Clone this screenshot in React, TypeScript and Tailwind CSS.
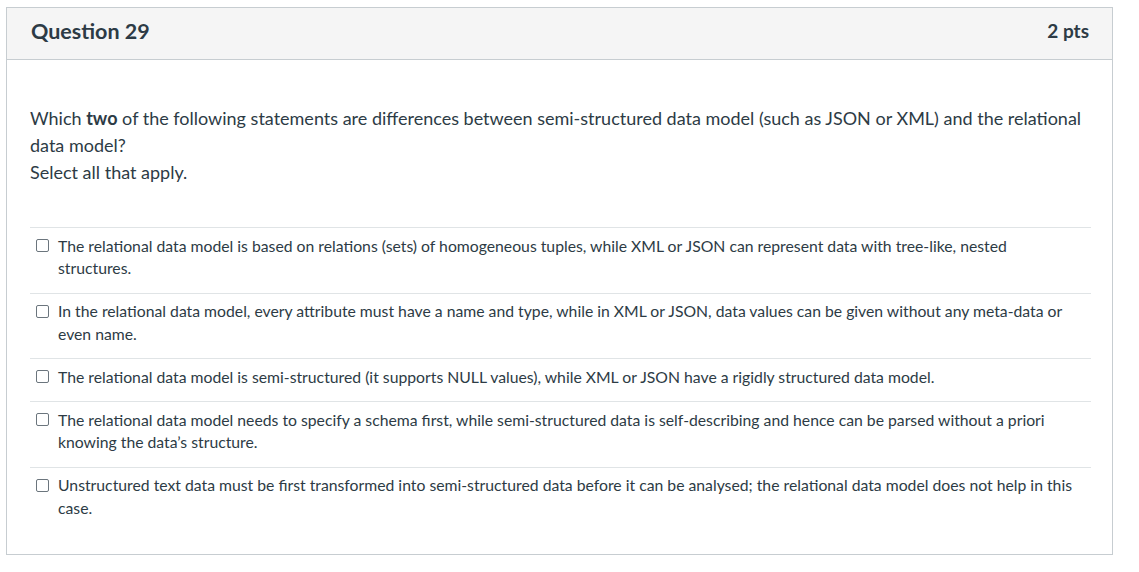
const answers = [
  'The relational data model is based on relations (sets) of homogeneous tuples, while XML or JSON can represent data with tree-like, nested structures.',
  'In the relational data model, every attribute must have a name and type, while in XML or JSON, data values can be given without any meta-data or even name.',
  'The relational data model is semi-structured (it supports NULL values), while XML or JSON have a rigidly structured data model.',
  'The relational data model needs to specify a schema first, while semi-structured data is self-describing and hence can be parsed without a priori knowing the data\u2019s structure.',
  'Unstructured text data must be first transformed into semi-structured data before it can be analysed; the relational data model does not help in this case.',
];

export default function App() {
  return (
    <div className="min-h-[572px] bg-white pt-[7px] pl-[6px] font-['Lato',sans-serif] text-[#2d3b45]">
      <div className="w-[1107px] border border-[#c7cdd1]">
        <div className="flex h-[52px] items-center justify-between border-b border-[#c7cdd1] bg-[#f5f5f5] pb-[5px] pl-[24px] pr-[23px]">
          <h2 className="text-[21.5px] font-bold">Question 29</h2>
          <div className="text-[19px] font-bold">2 pts</div>
        </div>
        <div className="pl-[23px] pr-[21px] pt-[45px] pb-[22px]">
          <div className="text-[18px] leading-[27px]">
            <p>
              Which <strong className="font-bold">two</strong> of the following statements are differences between semi-structured data model (such as JSON or XML) and the relational data model?
            </p>
            <p>Select all that apply.</p>
          </div>
          <div className="mt-[41px]">
            {answers.map((a, i) => (
              <div key={i} className="flex border-t border-[#e0e4e6] pt-[6.5px] pb-[13px] pr-[16px] text-[15.75px] leading-[22.5px]">
                <div className="flex h-[22.5px] w-[28px] shrink-0 items-center pl-[6px]">
                  <span className="block h-[13px] w-[13px] rounded-[2px] border border-[#6b757d] bg-white" />
                </div>
                <div>{a}</div>
              </div>
            ))}
          </div>
        </div>
      </div>
    </div>
  );
}
